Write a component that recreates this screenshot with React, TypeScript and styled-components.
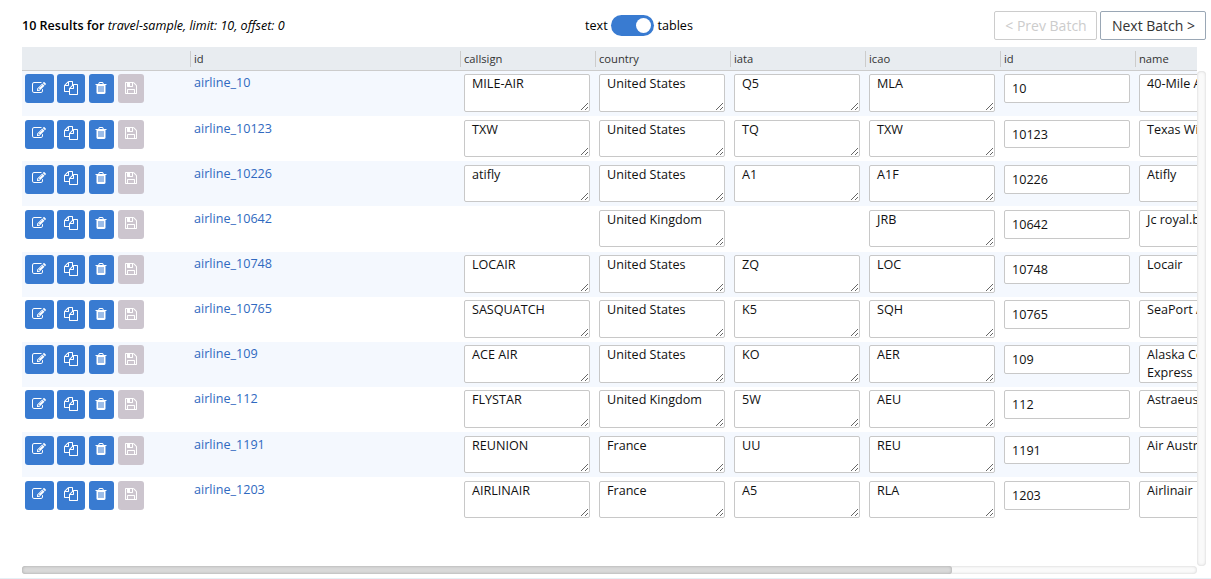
import React from 'react';
import styled, { createGlobalStyle, css } from 'styled-components';

const GlobalStyle = createGlobalStyle`
  * { box-sizing: border-box; }
  body {
    margin: 0;
    background: #fff;
    color: #000;
    font-family: "Open Sans", "Noto Sans", sans-serif;
    font-size: 12.6px;
    overflow: hidden;
  }
`;

const Page = styled.main`
  width: 1211px;
  height: 579px;
  display: flex;
  flex-direction: column;
  border-bottom: 1px solid #e6eff5;
`;

const Toolbar = styled.header`
  height: 47px;
  padding: 11px 5px 0 22px;
  display: grid;
  grid-template-columns: 563px 1fr auto;
  align-items: start;
`;

const Summary = styled.div`
  font-size: 12.56px;
  line-height: 17px;
  padding-top: 6px;
  white-space: nowrap;
  strong { font-weight: 600; }
`;

const ViewSwitch = styled.div`
  display: flex;
  align-items: center;
  gap: 3.4px;
  height: 21px;
  margin-top: 4px;
  line-height: 20px;
`;

const Track = styled.span`
  width: 43px;
  height: 21px;
  padding: 3px;
  border-radius: 11px;
  background: #397bd1;
  display: flex;
  justify-content: flex-end;
`;

const Knob = styled.span`
  width: 15px;
  height: 15px;
  border-radius: 50%;
  background: #fff;
`;

const Batches = styled.div`
  display: flex;
  gap: 3px;
`;

const BatchButton = styled.button<{ $w: number }>`
  width: ${(p) => p.$w}px;
  height: 29px;
  padding: 0 0 0 1px;
  border: 1px solid #9aa7b5;
  border-radius: 2px;
  background: #fff;
  color: #333;
  font: 14px/28px "Open Sans", sans-serif;
  white-space: nowrap;
  &:disabled {
    color: #ccc;
    border-color: #ccc;
  }
`;

const Body = styled.section`
  display: flex;
  margin-left: 22px;
  height: 519px;
`;

const Table = styled.div`
  width: 1175px;
  overflow: hidden;
`;

const columns = css`
  display: grid;
  grid-template-columns: 168px 270px repeat(6, 135px);
  width: 1248px;
`;

const HeadRow = styled.div`
  ${columns}
  height: 24px;
  padding-top: 4px;
  background: #e8ecf0;
  border-bottom: 1px solid #ccc;
`;

const HeadCell = styled.div<{ $first?: boolean }>`
  height: 16px;
  padding-left: 3px;
  border-left: 1px solid ${(p) => (p.$first ? 'transparent' : '#ccc')};
  color: #333;
  font-size: 11.2px;
  line-height: 16px;
`;

const Row = styled.div`
  ${columns}
  height: 45.17px;
  padding-top: 3.4px;
  &:nth-child(even) { background: #f4f8fe; }
`;

const Actions = styled.div`
  display: flex;
  padding-left: 3px;
`;

const ActionButton = styled.button<{ $w: number; $gap: number }>`
  width: ${(p) => p.$w}px;
  height: 29px;
  margin: 0 ${(p) => p.$gap}px 0 0;
  padding: 0 1px 2px 0;
  border: 0;
  border-radius: 3px;
  background: #397bd1;
  color: #fff;
  display: flex;
  align-items: center;
  justify-content: center;
  &:disabled { background: #ccc5ce; }
  svg { display: block; fill: currentColor; }
`;

const DocLink = styled.a`
  padding-left: 4px;
  color: #2f69c0;
  line-height: 17px;
`;

const Cell = styled.div`
  padding-left: 4px;
`;

const field = css`
  width: 126px;
  border: 1px solid #c8c8c8;
  border-radius: 2px;
  background: #fff;
  color: #111;
`;

const TextArea = styled.div`
  ${field}
  height: 37.6px;
  padding: 0 7px;
  line-height: 18px;
  resize: both;
  overflow: hidden;
`;

const NumberField = styled.div`
  ${field}
  height: 28.8px;
  padding: 0 7px;
  line-height: 27px;
`;

const VerticalBar = styled.div`
  width: 9px;
  height: 495px;
  margin-top: 24px;
  border-radius: 4px;
  background: #fafafa;
  box-shadow: inset 0 0 3px rgba(0, 0, 0, 0.18);
`;

const HorizontalBar = styled.div`
  width: 1175px;
  height: 8px;
  margin-left: 22px;
  border-radius: 4px;
  background: #fafafa;
  box-shadow: inset 0 0 3px rgba(0, 0, 0, 0.18);
`;

const Thumb = styled.div`
  width: 930px;
  height: 8px;
  border-radius: 3px;
  background: #d9d9d9;
  box-shadow: inset 0 0 3px rgba(0, 0, 0, 0.25);
`;

const icons = {
  edit: 'M888 1184l116-116-152-152-116 116v56h96v96h56zm440-720q-16-16-33 1l-350 350q-17 17-1 33t33-1l350-350q17-17 1-33zm80 594v190q0 119-84.5 203.5t-203.5 84.5h-832q-119 0-203.5-84.5t-84.5-203.5v-832q0-119 84.5-203.5t203.5-84.5h832q63 0 117 25 15 7 18 23 3 17-9 29l-49 49q-14 14-32 8-23-6-45-6h-832q-66 0-113 47t-47 113v832q0 66 47 113t113 47h832q66 0 113-47t47-113v-126q0-13 9-22l64-64q15-15 35-7t20 29zm-96-738l288 288-672 672h-288v-288zm444 132l-92 92-288-288 92-92q28-28 68-28t68 28l152 152q28 28 28 68t-28 68z',
  copy: 'M1696 384q40 0 68 28t28 68v1216q0 40-28 68t-68 28h-960q-40 0-68-28t-28-68v-288h-544q-40 0-68-28t-28-68v-672q0-40 20-88t48-76l408-408q28-28 76-48t88-20h416q40 0 68 28t28 68v328q68-40 128-40h416zm-544 213l-299 299h299v-299zm-640-384l-299 299h299v-299zm196 647l316-316v-416h-384v416q0 40-28 68t-68 28h-416v640h512v-256q0-40 20-88t48-76zm956 804v-1152h-384v416q0 40-28 68t-68 28h-416v640h896z',
  trash: 'M704 1376v-704q0-14-9-23t-23-9h-64q-14 0-23 9t-9 23v704q0 14 9 23t23 9h64q14 0 23-9t9-23zm256 0v-704q0-14-9-23t-23-9h-64q-14 0-23 9t-9 23v704q0 14 9 23t23 9h64q14 0 23-9t9-23zm256 0v-704q0-14-9-23t-23-9h-64q-14 0-23 9t-9 23v704q0 14 9 23t23 9h64q14 0 23-9t9-23zm-544-992h448l-48-117q-7-9-17-11h-317q-10 2-17 11zm928 32v64q0 14-9 23t-23 9h-96v948q0 83-47 143.5t-113 60.5h-832q-66 0-113-58.5t-47-141.5v-952h-96q-14 0-23-9t-9-23v-64q0-14 9-23t23-9h309l70-167q15-37 54-63t79-26h320q40 0 79 26t54 63l70 167h309q14 0 23 9t9 23z',
  save: 'M512 1536h768v-384h-768v384zm896 0h128v-896q0-14-10-38.5t-20-34.5l-281-281q-10-10-34-20t-39-10v416q0 40-28 68t-68 28h-576q-40 0-68-28t-28-68v-416h-128v1280h128v-416q0-40 28-68t68-28h832q40 0 68 28t28 68v416zm-384-928v-320q0-13-9.5-22.5t-22.5-9.5h-192q-13 0-22.5 9.5t-9.5 22.5v320q0 13 9.5 22.5t22.5 9.5h192q13 0 22.5-9.5t9.5-22.5zm640 32v928q0 40-28 68t-68 28h-1344q-40 0-68-28t-28-68v-1344q0-40 28-68t68-28h928q40 0 88 20t76 48l280 280q28 28 48 76t20 88z',
};

const Icon = ({ name }: { name: keyof typeof icons }) => (
  <svg width="14" height="14" viewBox="0 0 1792 1792" aria-hidden="true">
    <path d={icons[name]} />
  </svg>
);

type Airline = {
  id: number;
  name: string;
  country: string;
  icao: string;
  callsign?: string;
  iata?: string;
};

const airlines: Airline[] = [
  { id: 10, callsign: 'MILE-AIR', country: 'United States', iata: 'Q5', icao: 'MLA', name: '40-Mile Air' },
  { id: 10123, callsign: 'TXW', country: 'United States', iata: 'TQ', icao: 'TXW', name: 'Texas Wings' },
  { id: 10226, callsign: 'atifly', country: 'United States', iata: 'A1', icao: 'A1F', name: 'Atifly' },
  { id: 10642, country: 'United Kingdom', icao: 'JRB', name: 'Jc royal.britannica' },
  { id: 10748, callsign: 'LOCAIR', country: 'United States', iata: 'ZQ', icao: 'LOC', name: 'Locair' },
  { id: 10765, callsign: 'SASQUATCH', country: 'United States', iata: 'K5', icao: 'SQH', name: 'SeaPort Airlines' },
  { id: 109, callsign: 'ACE AIR', country: 'United States', iata: 'KO', icao: 'AER', name: 'Alaska Central Express' },
  { id: 112, callsign: 'FLYSTAR', country: 'United Kingdom', iata: '5W', icao: 'AEU', name: 'Astraeus' },
  { id: 1191, callsign: 'REUNION', country: 'France', iata: 'UU', icao: 'REU', name: 'Air Austral' },
  { id: 1203, callsign: 'AIRLINAIR', country: 'France', iata: 'A5', icao: 'RLA', name: 'Airlinair' },
];

const headings = ['id', 'callsign', 'country', 'iata', 'icao', 'id', 'name'];

const TextCell = ({ value }: { value?: string }) => (
  <Cell>{value && <TextArea role="textbox">{value}</TextArea>}</Cell>
);

const AirlineRow = ({ airline }: { airline: Airline }) => (
  <Row>
    <Actions>
      <ActionButton $w={29} $gap={3} aria-label="Edit"><Icon name="edit" /></ActionButton>
      <ActionButton $w={28} $gap={4} aria-label="Copy"><Icon name="copy" /></ActionButton>
      <ActionButton $w={25} $gap={4} aria-label="Delete"><Icon name="trash" /></ActionButton>
      <ActionButton $w={26} $gap={0} aria-label="Save" disabled><Icon name="save" /></ActionButton>
    </Actions>
    <DocLink>airline_{airline.id}</DocLink>
    <TextCell value={airline.callsign} />
    <TextCell value={airline.country} />
    <TextCell value={airline.iata} />
    <TextCell value={airline.icao} />
    <Cell><NumberField role="textbox">{airline.id}</NumberField></Cell>
    <TextCell value={airline.name} />
  </Row>
);

export default function App() {
  return (
    <>
      <GlobalStyle />
      <Page>
        <Toolbar>
          <Summary>
            <strong>10 Results for</strong> <em>travel-sample, limit: 10, offset: 0</em>
          </Summary>
          <ViewSwitch>
            <span>text</span>
            <Track><Knob /></Track>
            <span>tables</span>
          </ViewSwitch>
          <Batches>
            <BatchButton $w={103} disabled>&lt; Prev Batch</BatchButton>
            <BatchButton $w={106}>Next Batch &gt;</BatchButton>
          </Batches>
        </Toolbar>
        <Body>
          <Table>
            <HeadRow>
              <HeadCell $first />
              {headings.map((h, i) => <HeadCell key={i}>{h}</HeadCell>)}
            </HeadRow>
            {airlines.map((a) => <AirlineRow key={a.id} airline={a} />)}
          </Table>
          <VerticalBar />
        </Body>
        <HorizontalBar><Thumb /></HorizontalBar>
      </Page>
    </>
  );
}
